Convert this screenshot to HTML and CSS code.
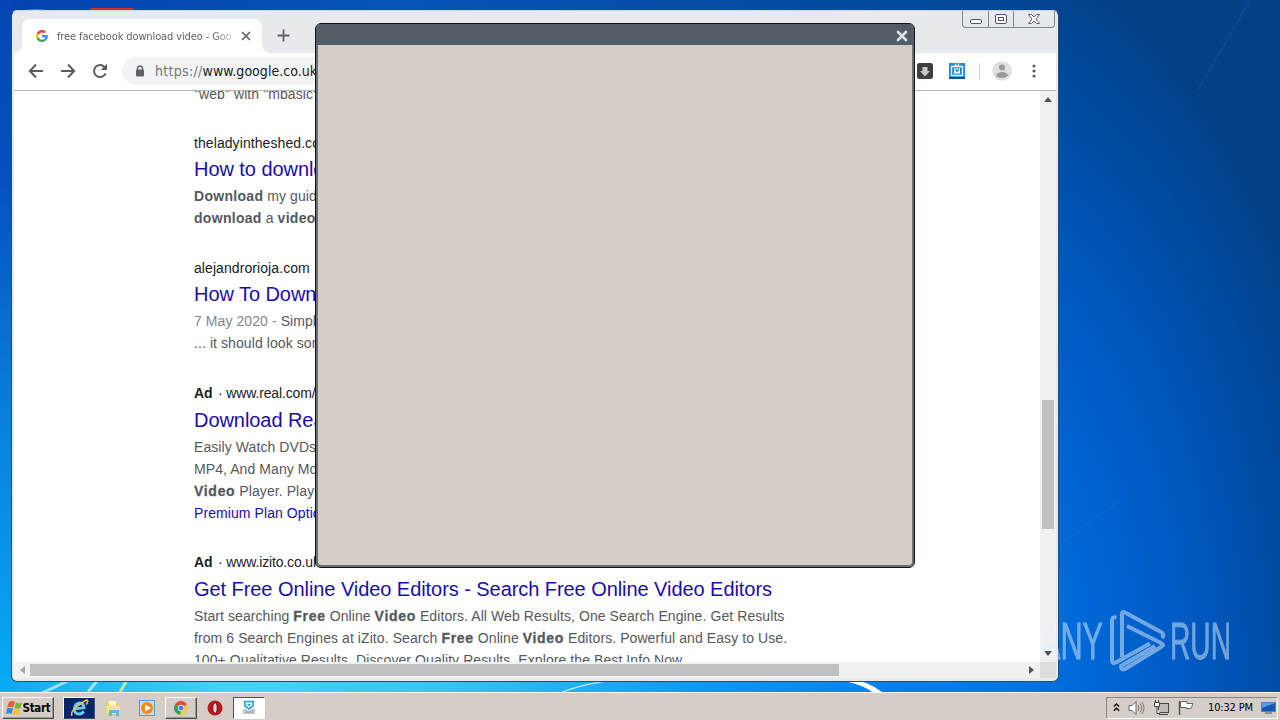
FILE: index.html
```html
<!DOCTYPE html>
<html lang="en">
<head>
  <meta charset="UTF-8" />
  <title>free facebook download video - Google Search</title>
  <link rel="stylesheet" href="styles.css">
</head>
<body>
  <div class="desktop">
    <svg class="wallpaper" width="1280" height="692" viewBox="0 0 1280 692">
      <path d="M24 10q12-1.500 24 0v2H24z" fill="#c5d3e0" opacity=".6"/>
      <rect x="90" y="8" width="44" height="8" rx="2" fill="#e02a20"/>
      <path d="M40 694l34-16M88 692l13-16M120 692l10-17" stroke="#d8ffff" stroke-width="3" opacity=".65"/>
      <path d="M120 692l10-17" stroke="#d6ee55" stroke-width="2" opacity=".8"/>
      <path d="M560 693q25-10 55-13" stroke="#c4f3ff" stroke-width="1.5" fill="none" opacity=".8"/>
      <path d="M838 680q24 4 34 12h10q-16-12-38-14z" fill="#fff"/>
      <path d="M1198 90L1250 0M1060 545l60-45" stroke="#2b80c8" stroke-width="2" opacity=".15"/>
    </svg>

    <div class="browser">
      <div class="titlebar">
        <div class="tab">
          <svg class="favicon" width="12" height="12" viewBox="0 0 48 48">
            <path fill="#EA4335" d="M24 9.500c3.500 0 6.700 1.200 9.200 3.600l6.900-6.900C35.900 2.400 30.500 0 24 0 14.600 0 6.500 5.400 2.600 13.200l8 6.200C12.400 13.700 17.700 9.500 24 9.500z"/>
            <path fill="#4285F4" d="M47 24.600c0-1.600-.2-3.100-.4-4.600H24v9h12.900c-.6 3-2.300 5.500-4.800 7.200l7.700 6C44.400 38 47 31.800 47 24.600z"/>
            <path fill="#FBBC05" d="M10.500 28.600a14 14 0 0 1 0-9.200l-8-6.200a24 24 0 0 0 0 21.600z"/>
            <path fill="#34A853" d="M24 48c6.500 0 12-2.100 15.900-5.800l-7.700-6c-2.200 1.500-5 2.300-8.200 2.300-6.300 0-11.600-4.200-13.500-9.900l-8 6.200C6.500 42.600 14.600 48 24 48z"/>
          </svg>
          <span class="tab-title">free facebook download video - Goo</span>
          <svg width="10" height="10" viewBox="0 0 10 10"><path d="M1 1l8 8M9 1L1 9" stroke="#5f6368" stroke-width="1.700"/></svg>
        </div>
        <svg class="new-tab" width="13" height="13" viewBox="0 0 13 13"><path d="M6.500 .5v12M.5 6.500h12" stroke="#5f6368" stroke-width="1.800"/></svg>
        <div class="window-buttons">
          <span><svg width="14" height="12" viewBox="0 0 14 12"><rect x="1.500" y="6.500" width="11" height="4" rx="1.500" fill="#fff" stroke="#4e535f"/></svg></span>
          <span><svg width="14" height="12" viewBox="0 0 14 12"><rect x="1.500" y="1.500" width="11" height="9" rx="1.500" fill="#fff" stroke="#4e535f"/><rect x="4.500" y="4.500" width="5" height="3" fill="#fff" stroke="#4e535f"/></svg></span>
          <span class="wide"><svg width="14" height="12" viewBox="0 0 14 12"><path d="M1.500 1.500H4.500L7 4L9.500 1.500H12.500L9 6L12.500 10.500H9.500L7 8L4.500 10.500H1.500L5 6z" fill="#fff" stroke="#4e535f" stroke-width=".9"/></svg></span>
        </div>
      </div>

      <div class="toolbar">
        <svg width="16" height="16" viewBox="0 0 16 16"><path d="M15 8H2M8 1.500L1.800 8L8 14.500" fill="none" stroke="#5a5e62" stroke-width="2"/></svg>
        <svg width="16" height="16" viewBox="0 0 16 16"><path d="M1 8h13M8 1.500L14.200 8L8 14.500" fill="none" stroke="#5a5e62" stroke-width="2"/></svg>
        <svg width="16" height="16" viewBox="0 0 16 16"><path d="M13.600 10.300A6 6 0 1 1 12.500 4" fill="none" stroke="#5a5e62" stroke-width="2"/><path d="M15 .8V7H8.800z" fill="#5a5e62"/></svg>
        <div class="omnibox">
          <svg width="10" height="12" viewBox="0 0 10 12"><path d="M2.500 5V3.500a2.500 2.500 0 0 1 5 0V5" fill="none" stroke="#5f6368" stroke-width="1.500"/><rect x="1" y="4.500" width="8" height="7" rx="1" fill="#5f6368"/></svg>
          <span class="url"><span class="scheme">https://</span>www.google.co.uk</span>
        </div>
        <div class="extensions">
          <svg width="16" height="16" viewBox="0 0 16 16"><rect width="16" height="16" rx="2.500" fill="#3f3f3f"/><path d="M5.500 4h5v4H13l-5 5.500L3 8h2.500z" fill="#c8c8c8"/></svg>
          <svg width="16" height="16" viewBox="0 0 16 16"><path d="M0 0h16v16H0z" fill="#1c8af0"/><path d="M0 14h16v2H0z" fill="#0c4f9c"/><path d="M2.500 3.500h11v9h-11z" fill="none" stroke="#fff" stroke-width="1.300"/><path d="M6 .5l1.500 3M10 .5l-1.500 3" stroke="#fff" stroke-width="1.200"/><path d="M5 5.500h6v5H5z" fill="#fff"/><path d="M5.500 6.500h5L8 9.500z" fill="#1c8af0"/></svg>
          <i class="divider"></i>
          <svg width="20" height="20" viewBox="0 0 20 20"><circle cx="10" cy="10" r="9.800" fill="#e0e0e0"/><circle cx="10" cy="6.500" r="3" fill="#9a9a9a"/><ellipse cx="10" cy="14" rx="5.800" ry="3" fill="#9a9a9a"/></svg>
          <svg class="menu" width="4" height="14" viewBox="0 0 4 14" fill="#5a5e62"><circle cx="2" cy="2" r="1.600"/><circle cx="2" cy="7" r="1.600"/><circle cx="2" cy="12" r="1.600"/></svg>
        </div>
      </div>

      <div class="viewport">
        <div class="results">
          <div class="result first">
            <p>"web" with "mbasic"</p>
          </div>
          <div class="result">
            <cite>theladyintheshed.com</cite>
            <h3>How to download</h3>
            <p><b>Download</b> my guide</p>
            <p><b>download</b> a <b>video</b></p>
          </div>
          <div class="result">
            <cite>alejandrorioja.com</cite>
            <h3>How To Download</h3>
            <p><span class="date">7 May 2020 - </span>Simple</p>
            <p>... it should look some</p>
          </div>
          <div class="result ad">
            <cite><b>Ad</b> · www.real.com/</cite>
            <h3>Download Real</h3>
            <p>Easily Watch DVDs</p>
            <p>MP4, And Many More</p>
            <p><b>Video</b> Player. Play</p>
            <p class="sitelink">Premium Plan Options</p>
          </div>
          <div class="result ad">
            <cite><b>Ad</b> · www.izito.co.uk</cite>
            <h3>Get Free Online Video Editors - Search Free Online Video Editors</h3>
            <p>Start searching <b>Free</b> Online <b>Video</b> Editors. All Web Results, One Search Engine. Get Results</p>
            <p>from 6 Search Engines at iZito. Search <b>Free</b> Online <b>Video</b> Editors. Powerful and Easy to Use.</p>
            <p>100+ Qualitative Results. Discover Quality Results. Explore the Best Info Now.</p>
          </div>
        </div>
        <div class="scroll-y">
          <i class="arrow up"></i>
          <i class="thumb"></i>
          <i class="arrow down"></i>
        </div>
        <div class="scroll-x">
          <i class="arrow left"></i>
          <i class="thumb"></i>
          <i class="arrow right"></i>
        </div>
        <div class="corner"></div>
      </div>
    </div>

    <div class="dialog">
      <div class="dialog-title">
        <svg width="12" height="12" viewBox="0 0 12 12"><path d="M2 2l8 8M10 2l-8 8" stroke="#dde5e9" stroke-width="2.600" stroke-linecap="round"/></svg>
      </div>
    </div>

    <svg class="watermark" width="200" height="70" viewBox="0 0 200 70">
      <text x="4" y="54" textLength="63" lengthAdjust="spacingAndGlyphs">ANY</text>
      <path d="M80.500 12.500q-4.500-1-4.500 3V56q0 3 4 1.500L114 38.500M86 52V9q0-3 3-1.500L125 27q4 2 1 6M91 21l34 17q4 2 0 4L89 64q-4 2-4-3l34-20"/>
      <text x="134" y="54" textLength="61" lengthAdjust="spacingAndGlyphs">RUN</text>
    </svg>
  </div>

  <div class="taskbar">
    <div class="start">
      <svg width="17" height="16" viewBox="0 0 17 16"><path d="M3 2q3-2 6 0L7 7.500q-3-1.500-6 0z" fill="#ed5b24"/><path d="M10 2.500q3 1.500 6 0L14.500 8q-3 1.500-6 0z" fill="#75b72d"/><path d="M1 8.500q3-1.500 6 0L5.500 14q-3-1.500-5.500 0z" fill="#3687d6"/><path d="M8 9q3 1.500 6 0l-1.500 5q-3 2-6 0z" fill="#f6bf27"/></svg>
      <b>Start</b>
    </div>
    <div class="task ie">
      <svg width="20" height="20" viewBox="0 0 20 20"><path d="M5.500 10.800L15 9.800Q14.500 5 10.800 5 6 5.500 5.300 11 5.500 16 10 16q3 0 4.800-2.600" fill="none" stroke="#72c8fa" stroke-width="2.800"/><path d="M3 18q-2-4 5-9.500T18 2q2 1-1 4.500" fill="none" stroke="#f3c83b" stroke-width="1.500"/></svg>
    </div>
    <div class="task">
      <svg width="18" height="18" viewBox="0 0 18 18"><path d="M2 3h5l1 2h7v11H2z" fill="#e9cb68"/><path d="M5 2h7v5H5z" fill="#fff6cc"/><path d="M2.500 6.500h13V15h-13z" fill="#f5e49a"/><path d="M5 17v-6h10v6h-3v-3H8v3z" fill="#62b6e8"/></svg>
    </div>
    <div class="task">
      <svg width="16" height="16" viewBox="0 0 16 16"><rect x=".5" y=".5" width="15" height="15" fill="#c3def2" stroke="#559bd3"/><circle cx="8" cy="8" r="6" fill="#f38b16"/><path d="M6 4.500v7l6-3.500z" fill="#fff"/></svg>
    </div>
    <div class="task raised">
      <svg width="14" height="14" viewBox="0 0 14 14"><path d="M7 7L1 3.500A7 7 0 0 1 13 3.500z" fill="#de4938"/><path d="M7 7L1 3.500A7 7 0 0 0 6.500 14z" fill="#2fa252"/><path d="M7 7l6-3.500A7 7 0 0 1 6.500 14z" fill="#f8ca3e"/><circle cx="7" cy="7" r="3.200" fill="#fff"/><circle cx="7" cy="7" r="2.500" fill="#417ee8"/></svg>
    </div>
    <div class="task">
      <svg width="16" height="16" viewBox="0 0 16 16"><circle cx="8" cy="8" r="7.500" fill="#b9181c"/><ellipse cx="8" cy="8" rx="2.200" ry="5.300" fill="#ddd" stroke="#7b0509"/></svg>
    </div>
    <div class="task pressed">
      <svg width="14" height="16" viewBox="0 0 14 16"><path d="M2.500 1.500h9L11 6 7 9 3 6z" fill="#d5edf8" stroke="#399cc9" stroke-width="1.600"/><path d="M5 4h4L7 6z" fill="#399cc9"/><path d="M1 9h3l3 2 3-2h3v5H1z" fill="#c3c6c8"/><path d="M3 12h8" stroke="#999"/></svg>
    </div>
    <div class="tray">
      <svg width="7" height="11" viewBox="0 0 7 11"><path d="M.8 4.500L3.500 2l2.700 2.500M.8 8.800l2.700-2.500 2.700 2.500" fill="none" stroke="#111" stroke-width="1.400"/></svg>
      <svg width="17" height="16" viewBox="0 0 17 16"><path d="M1 5.500h3l4-4v13l-4-4H1z" fill="#fff" stroke="#666"/><path d="M10 5q2 3 0 6M12 3.500q3.500 4.500 0 9M14 2q4 6 0 12" fill="none" stroke="#777"/></svg>
      <svg width="17" height="16" viewBox="0 0 17 16"><rect x="5.500" y="3.500" width="10" height="9" fill="#bbb" stroke="#444"/><path d="M6 14.500h9" stroke="#444"/><path d="M1.500 2.500h5v4h-5zM4 7v6.500h3M2.500 0v3M5.500 0v3" fill="#fff" stroke="#444"/></svg>
      <svg width="17" height="16" viewBox="0 0 17 16"><path d="M1.500 1v14" stroke="#555" stroke-width="1.500"/><path d="M2.500 1.500H9v2h6l-2 5H8v-1H2.500z" fill="#fff" stroke="#666"/></svg>
      <span class="clock">10:32 PM</span>
      <svg width="15" height="12" viewBox="0 0 15 12"><path d="M.5.500h14v9H.5z" fill="#1655b1" stroke="#4c83cb"/><path d="M1 1h13L1 6z" fill="#5b9be4"/><path d="M4 11h7" stroke="#555"/></svg>
    </div>
  </div>
</body>
</html>
```
FILE: styles.css
```css
* {
  box-sizing: border-box;
}

body {
  margin: 0;
  width: 1280px;
  height: 720px;
  overflow: hidden;
  font-family: "Liberation Sans", Arial, sans-serif;
}

svg {
  display: block;
  flex: none;
}

/* Desktop */
.desktop {
  position: relative;
  height: 692px;
  overflow: hidden;
  background:
    linear-gradient(90deg, #08aaf5 0, #45d5f2 18%, #35c5f1 35%, #0c98f5 55%, #0480ed 70%, transparent 84%) 0 100% / 100% 13px no-repeat,
    linear-gradient(180deg, #0646b4 0, #064fc0 25%, #087fdd 60%, #08aaf8 100%) 0 0 / 14px 100% no-repeat,
    linear-gradient(90deg, #0442ae 0, #0654b8 30%, #044b9f 65%, transparent 80%) 0 0 / 100% 12px no-repeat,
    radial-gradient(ellipse 430px 760px at 930px 690px, #0078e8 0, #006bdb 32%, #005bc5 58%, #004a9f 85%, #024188 100%);
}

.wallpaper {
  position: absolute;
  left: 0;
  top: 0;
}

/* Browser window */
.browser {
  position: absolute;
  left: 11px;
  top: 10px;
  width: 1048px;
  height: 672px;
  display: flex;
  flex-direction: column;
  padding: 0 2px 3px;
  background: #e7eaed;
  border: 1px solid #24506f;
  border-top-color: #c8d8e5;
  border-radius: 6px;
}

.titlebar {
  height: 42px;
  display: flex;
  align-items: flex-start;
  padding-left: 8px;
}

.tab {
  position: relative;
  width: 240px;
  height: 34px;
  margin-top: 8px;
  padding: 0 11px 0 14px;
  display: flex;
  align-items: center;
  background: #fff;
  border-radius: 8px 8px 0 0;
}

.tab::before,
.tab::after {
  content: "";
  position: absolute;
  bottom: 0;
  width: 8px;
  height: 8px;
}

.tab::before {
  left: -8px;
  background: radial-gradient(circle at 0 0, transparent 7.500px, #fff 8px);
}

.tab::after {
  right: -8px;
  background: radial-gradient(circle at 100% 0, transparent 7.500px, #fff 8px);
}

.tab-title {
  width: 176px;
  margin: 0 auto 0 9px;
  font-family: "DejaVu Sans Condensed", "DejaVu Sans", sans-serif;
  font-stretch: condensed;
  font-size: 11px;
  letter-spacing: -0.120px;
  white-space: nowrap;
  color: #5f6368;
  mask-image: linear-gradient(90deg, #000 88%, rgba(0, 0, 0, 0.3));
}

.new-tab {
  margin: 18px 0 0 15px;
}

.window-buttons {
  display: flex;
  height: 17px;
  margin-left: auto;
  margin-right: 1px;
  border: 1px solid #83888e;
  border-top: none;
  border-radius: 0 0 4px 4px;
}

.window-buttons span {
  width: 25px;
  display: flex;
  align-items: center;
  justify-content: center;
}

.window-buttons span + span {
  border-left: 1px solid #83888e;
}

.window-buttons .wide {
  width: 41px;
}

.toolbar {
  height: 38px;
  display: flex;
  align-items: center;
  gap: 16px;
  padding: 0 20px 1px 14px;
  background: #fff;
  border-bottom: 1px solid #b6b4b4;
}

.omnibox {
  flex: 1;
  height: 28px;
  margin-left: -2px;
  margin-right: 30px;
  padding-left: 13px;
  display: flex;
  align-items: center;
  gap: 10px;
  border-radius: 14px;
  background: #f1f3f4;
}

.url {
  font-family: "DejaVu Sans Condensed", "DejaVu Sans", sans-serif;
  font-stretch: condensed;
  font-size: 14px;
  letter-spacing: 0.040px;
  white-space: nowrap;
  color: #202124;
}

.scheme {
  letter-spacing: 0.300px;
  color: #73777b;
}

.extensions {
  display: flex;
  align-items: center;
  gap: 16px;
}

.extensions .divider {
  width: 1px;
  height: 16px;
  margin: 0 -4px 0 -2px;
  background: #d0d2d5;
}

.extensions .menu {
  margin-left: 4px;
}

/* Page and scrollbars */
.viewport {
  flex: 1;
  min-height: 0;
  display: grid;
  grid-template-columns: 1fr 16px;
  grid-template-rows: 1fr 16px;
  background: #fff;
}

.results {
  min-height: 0;
  overflow: hidden;
  padding-left: 180px;
  font-size: 14px;
  letter-spacing: 0.080px;
  white-space: nowrap;
}

.result {
  margin-bottom: 28px;
}

.result.ad {
  margin-bottom: 27px;
}

.result.first {
  margin-top: -8px;
  margin-bottom: 27px;
}

.result cite {
  display: block;
  height: 22px;
  line-height: 22px;
  font-style: normal;
  color: #202124;
}

.result.ad cite {
  letter-spacing: -0.150px;
}

.result cite b {
  margin-right: 2px;
}

.result h3 {
  margin: 0;
  height: 31px;
  line-height: 31px;
  font-size: 20px;
  font-weight: normal;
  letter-spacing: -0.060px;
  color: #1a0dab;
}

.result.ad h3 {
  margin-top: 1px;
}

.result p {
  margin: 0;
  height: 22px;
  line-height: 22px;
  color: #55585c;
}

.result p b {
  letter-spacing: 0.300px;
}

.result.ad p b {
  letter-spacing: 0.700px;
  -webkit-text-stroke: 0.300px #55585c;
}

.result .date {
  color: #80868b;
}

.result .sitelink {
  color: #1a0dab;
}

.scroll-y,
.scroll-x {
  display: flex;
  align-items: center;
  justify-content: space-between;
  background: #f1f1f1;
}

.scroll-y {
  flex-direction: column;
  padding: 6px 0;
}

.scroll-x {
  padding: 0 6px;
}

.scroll-y .thumb {
  width: 12px;
  height: 129px;
  margin-top: 176px;
  background: #c1c1c1;
}

.scroll-x .thumb {
  width: 809px;
  height: 12px;
  margin: 0 auto 0 5px;
  background: #c1c1c1;
}

.arrow {
  border: 4px solid transparent;
}

.arrow.up {
  border-top: 0;
  border-bottom: 5px solid #505050;
}

.arrow.down {
  border-bottom: 0;
  border-top: 5px solid #505050;
}

.arrow.left {
  border-left: 0;
  border-right: 5px solid #a3a3a3;
}

.arrow.right {
  border-right: 0;
  border-left: 5px solid #505050;
}

.corner {
  background: #dcdcdc;
}

/* Empty popup */
.dialog {
  position: absolute;
  left: 315px;
  top: 23px;
  width: 600px;
  height: 545px;
  background: #d5cec8;
  border: 1px solid #101417;
  border-radius: 6px;
  box-shadow: inset 0 0 0 2px #687073;
  overflow: hidden;
}

.dialog-title {
  height: 21px;
  display: flex;
  align-items: center;
  justify-content: flex-end;
  padding: 3px 6px 0 0;
  background: #535d65;
}

.watermark {
  position: absolute;
  left: 1036px;
  top: 605px;
  opacity: 0.5;
}

.watermark text {
  font-size: 51px;
  fill: #e3f0fc;
  stroke: #e3f0fc;
  stroke-width: 0.8px;
}

.watermark path {
  fill: none;
  stroke: #e3f0fc;
  stroke-width: 4;
  stroke-linejoin: round;
}

/* Taskbar */
.taskbar {
  height: 28px;
  display: flex;
  align-items: center;
  padding: 3px 2px 1px;
  background: #d5cec8;
  border-top: 1px solid #f7f5f2;
}

.start,
.task {
  height: 22px;
  display: flex;
  align-items: center;
  justify-content: center;
}

.start,
.raised {
  border: 1px solid #fff;
  border-right-color: #505050;
  border-bottom-color: #505050;
  box-shadow: inset -1px -1px #9b958f;
}

.start {
  width: 52px;
  margin-right: 7px;
  font-family: "DejaVu Sans Condensed", "DejaVu Sans", sans-serif;
  font-stretch: condensed;
  font-size: 11.500px;
  letter-spacing: -0.300px;
}

.task {
  width: 32px;
  margin-left: 2px;
}

.ie {
  background: #04276c;
  border: 1px solid #fff;
  border-right-color: #505050;
  border-bottom-color: #505050;
}

.pressed {
  background: #fff;
  border: 1px solid #505050;
  border-right-color: #fff;
  border-bottom-color: #fff;
}

.tray {
  width: 172px;
  height: 22px;
  margin-left: auto;
  padding: 0 1px 0 6px;
  display: flex;
  align-items: center;
  justify-content: space-between;
  border: 1px solid #8b8680;
  border-right-color: #fff;
  border-bottom-color: #fff;
}

.clock {
  margin-left: 5px;
  font-family: "DejaVu Sans Condensed", "DejaVu Sans", sans-serif;
  font-stretch: condensed;
  font-size: 11px;
  letter-spacing: -0.150px;
  white-space: nowrap;
}
```
